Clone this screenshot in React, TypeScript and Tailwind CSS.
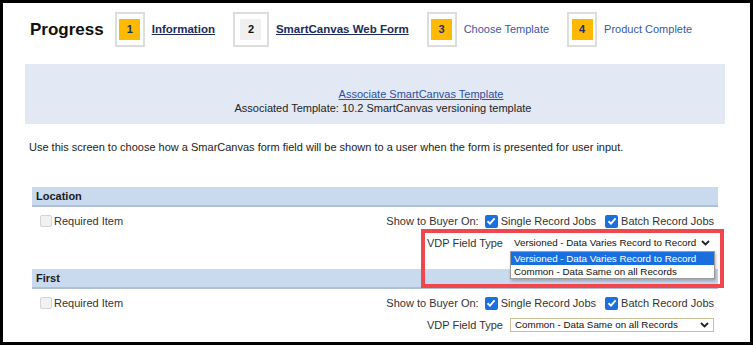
import React from "react";

type Step = {
  n: number;
  label: string;
  done: boolean;
  current: boolean;
  wide?: boolean;
};

const steps: Step[] = [
  { n: 1, label: "Information", done: true, current: true },
  { n: 2, label: "SmartCanvas Web Form", done: false, current: true, wide: true },
  { n: 3, label: "Choose Template", done: true, current: false },
  { n: 4, label: "Product Complete", done: true, current: false },
];

const Check = ({ checked, disabled }: { checked?: boolean; disabled?: boolean }) => {
  if (checked) {
    return (
      <span className="flex h-[13px] w-[13px] items-center justify-center rounded-[2px] bg-[#1a70dc]">
        <svg width="10" height="10" viewBox="0 0 10 10">
          <path d="M1.5 5.2 L4 7.6 L8.6 2.4" fill="none" stroke="#fff" strokeWidth="1.9" />
        </svg>
      </span>
    );
  }
  return (
    <span
      className={
        disabled
          ? "h-[12px] w-[12px] rounded-[2px] border border-[#d4d4d4] bg-[#f1f1f1]"
          : "h-[12px] w-[12px] rounded-[2px] border border-[#777]"
      }
    />
  );
};

const Chevron = () => (
  <svg width="9" height="6" viewBox="0 0 9 6">
    <path d="M1 1 L4.5 4.5 L8 1" fill="none" stroke="#222" strokeWidth="1.8" />
  </svg>
);

const FakeSelect = ({ value, bordered }: { value: string; bordered?: boolean }) => (
  <div
    className={
      "flex h-[14px] w-[204px] items-center justify-between bg-white pl-[4px] pr-[4px] " +
      (bordered ? "border border-[#cbbf98]" : "")
    }
  >
    <span className="whitespace-nowrap text-[9.8px] leading-[12px] text-[#111]">{value}</span>
    <Chevron />
  </div>
);

const Section = ({
  title,
  value,
  open,
}: {
  title: string;
  value: string;
  open?: boolean;
}) => (
  <div className="relative ml-[29px] w-[686px]">
    <div className="flex h-[20px] items-center border-b-2 border-[#aebfd6] bg-[#c9d9ee] pl-[4px] text-[11px] font-bold text-[#1a1a1a]">
      {title}
    </div>
    <div className="mt-[7px] flex h-[14px] items-center justify-between pl-[8px] pr-[4px] text-[11px] text-[#333]">
      <div className="flex items-center gap-[2px]">
        <Check disabled />
        <span>Required Item</span>
      </div>
      <div className="flex items-center">
        <span className="mr-[6px]">Show to Buyer On:</span>
        <Check checked />
        <span className="ml-[3px] mr-[9px]">Single Record Jobs</span>
        <Check checked />
        <span className="ml-[3px]">Batch Record Jobs</span>
      </div>
    </div>
    <div className="mt-[8px] flex h-[14px] items-center justify-end pr-[4px] text-[11px] text-[#333]">
      <span className="mr-[7px]">VDP Field Type</span>
      <FakeSelect value={value} bordered={!open} />
    </div>

    {open && (
      <>
        <div className="absolute left-[478px] top-[64px] z-10 w-[205px] border border-[#9a9a9a] bg-white text-[9.8px] leading-[13px] shadow-[1px_2px_3px_rgba(0,0,0,0.25)]">
          <div className="whitespace-nowrap bg-[#1a6fe0] pl-[3px] text-white">
            Versioned - Data Varies Record to Record
          </div>
          <div className="whitespace-nowrap pl-[3px] text-[#111]">Common - Data Same on all Records</div>
        </div>
        <div className="absolute left-[389px] top-[42px] z-20 h-[59px] w-[303px] border-4 border-[#f0474e]" />
      </>
    )}
  </div>
);

export default function App() {
  return (
    <div className="h-[345px] w-[753px] overflow-hidden border-[3px] border-black bg-white font-['Liberation_Sans',Arial,sans-serif] text-[#222]">
      {/* progress bar */}
      <div className="flex items-center pl-[27px] pt-[9px]">
        <div className="text-[17px] font-bold text-[#111]">Progress</div>
        <div className="ml-[11px] flex items-center gap-[18px]">
          {steps.map((s) => (
            <div key={s.n} className="flex items-center gap-[7px]">
              <div
                className={
                  "flex h-[35px] items-center justify-center border-2 border-[#dddddd] " +
                  (s.wide ? "w-[36px]" : "w-[30px]")
                }
              >
                <div
                  className={
                    "flex h-[21px] w-[21px] items-center justify-center text-[11px] font-bold " +
                    (s.done ? "bg-[#ffb900] text-[#1e2f62]" : "bg-[#f0f0f0] text-[#111]")
                  }
                >
                  {s.n}
                </div>
              </div>
              {s.current ? (
                <a className="text-[11.5px] font-bold text-[#1c2b5b] underline">{s.label}</a>
              ) : (
                <span className="text-[11px] text-[#3a58a6]">{s.label}</span>
              )}
            </div>
          ))}
        </div>
      </div>

      {/* template box */}
      <div className="ml-[22px] mt-[17px] flex h-[60px] w-[700px] flex-col justify-end bg-[#e3e9f4] pb-[9px] text-[11px] leading-[14px]">
        <div className="pl-[92px] text-center">
          <a className="text-[#2b4ea0] underline">Associate SmartCanvas Template</a>
        </div>
        <div className="pl-[16px] text-center text-[#222]">
          Associated Template: 10.2 SmartCanvas versioning template
        </div>
      </div>

      <p className="ml-[26px] mt-[16px] text-[11px] leading-[14px] text-[#222]">
        Use this screen to choose how a SmarCanvas form field will be shown to a user when the form is presented for user input.
      </p>

      <div className="mt-[33px]">
        <Section title="Location" value="Versioned - Data Varies Record to Record" open />
      </div>
      <div className="mt-[19px]">
        <Section title="First" value="Common - Data Same on all Records" />
      </div>
    </div>
  );
}
